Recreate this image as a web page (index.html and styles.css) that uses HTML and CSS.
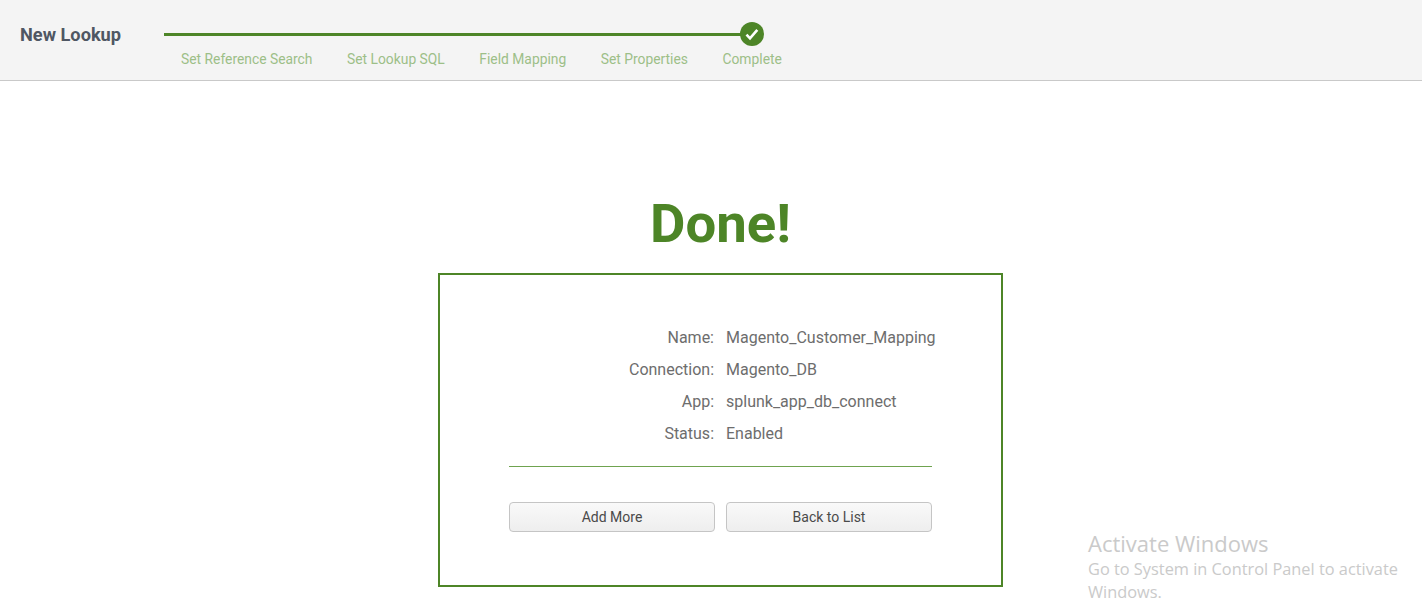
FILE: index.html
```html
<!DOCTYPE html>
<html lang="en">
<head>
<meta charset="utf-8">
<title>New Lookup</title>
<link rel="stylesheet" href="styles.css">
</head>
<body>
<header class="topbar">
  <h1 class="topbar-title">New Lookup</h1>
  <div class="wizard">
    <div class="rail">
      <span class="rail-line"></span>
      <svg class="rail-check" width="24" height="24" viewBox="0 0 24 24" aria-hidden="true">
        <circle cx="12" cy="12" r="12" fill="#4d8527"/>
        <path d="M6.5 12.6l3.5 3.8 7.3-8.6" fill="none" stroke="#fff" stroke-width="2.6"/>
      </svg>
    </div>
    <ol class="steps">
      <li>Set Reference Search</li>
      <li>Set Lookup SQL</li>
      <li>Field Mapping</li>
      <li>Set Properties</li>
      <li>Complete</li>
    </ol>
  </div>
</header>
<main class="content">
  <h2 class="done">Done!</h2>
  <section class="card">
    <dl class="details">
      <dt>Name:</dt><dd>Magento_Customer_Mapping</dd>
      <dt>Connection:</dt><dd>Magento_DB</dd>
      <dt>App:</dt><dd>splunk_app_db_connect</dd>
      <dt>Status:</dt><dd>Enabled</dd>
    </dl>
    <hr class="divider">
    <div class="actions">
      <button class="btn" type="button">Add More</button>
      <button class="btn" type="button">Back to List</button>
    </div>
  </section>
</main>
<aside class="watermark">
  <div class="watermark-title">Activate Windows</div>
  <div class="watermark-text">Go to System in Control Panel to activate Windows.</div>
</aside>
</body>
</html>
```
FILE: styles.css
```css
* { box-sizing: border-box; }
html, body { height: 100%; }
body {
  margin: 0;
  background: #fff;
  font-family: Roboto, "Liberation Sans", sans-serif;
  overflow: hidden;
}
.topbar {
  display: flex;
  align-items: flex-start;
  height: 81px;
  padding: 22px 0 0 20px;
  background: #f4f4f4;
  border-bottom: 1px solid #c9c9c9;
}
.topbar-title {
  width: 144px;
  margin: 1px 0 0;
  font-size: 18.2px;
  line-height: 24px;
  font-weight: 700;
  color: #4f5763;
}
.wizard { width: 634px; }
.rail {
  display: flex;
  align-items: center;
  width: 600px;
  height: 24px;
}
.rail-line {
  flex: 1;
  height: 3px;
  background: #4d8527;
}
.rail-check { flex: none; margin-left: -6px; }
.steps {
  display: flex;
  gap: 34.5px;
  margin: 4px 0 0;
  padding: 0 0 0 17px;
  list-style: none;
  font-size: 13.85px;
  line-height: 18px;
  color: #9dbf88;
  white-space: nowrap;
}
.content {
  display: flex;
  flex-direction: column;
  align-items: center;
  padding: 112px 0 0 19px;
}
.done {
  margin: 0;
  font-size: 54.5px;
  line-height: 60px;
  font-weight: 700;
  color: #4d8527;
}
.card {
  width: 565px;
  height: 314px;
  margin-top: 20px;
  padding: 51px 69px 0;
  border: 2px solid #4d8527;
}
.details {
  display: grid;
  grid-template-columns: 205px 1fr;
  column-gap: 12px;
  row-gap: 8px;
  margin: 0;
  font-size: 16px;
  line-height: 24px;
  color: #6d6d6d;
}
.details dt { text-align: right; }
.details dd { margin: 0; white-space: nowrap; }
.divider {
  height: 1px;
  width: 423px;
  margin: 20px 0 35px;
  border: 0;
  background: #6fa34f;
}
.actions {
  display: flex;
  gap: 11px;
  width: 423px;
}
.btn {
  flex: 1;
  height: 30px;
  padding: 0;
  border: 1px solid #c5c5c5;
  border-radius: 4px;
  background: linear-gradient(#f9f9f9, #eeeeee);
  font-family: inherit;
  font-size: 14px;
  color: #4a4a4a;
}
.watermark {
  position: absolute;
  left: 1088px;
  top: 529px;
  width: 320px;
  font-family: "Open Sans", sans-serif;
  color: #cacaca;
}
.watermark-title { font-size: 22px; line-height: 29px; }
.watermark-text { font-size: 16.35px; line-height: 23px; }
```
